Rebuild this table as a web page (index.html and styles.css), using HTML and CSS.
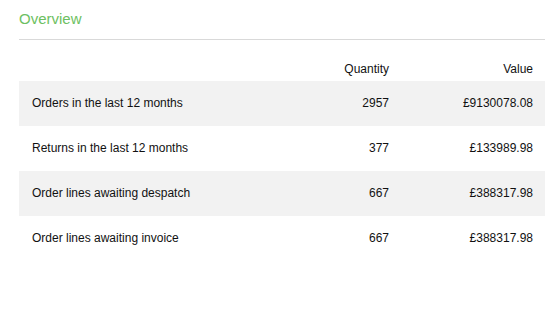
FILE: index.html
```html
<!DOCTYPE html>
<html>
<head>
<meta charset="utf-8">
<link rel="stylesheet" href="styles.css">
</head>
<body>
<div class="panel">
  <h2 class="title">Overview</h2>
  <table class="overview">
    <colgroup>
      <col>
      <col class="num-col">
      <col class="num-col">
    </colgroup>
    <thead>
      <tr><th class="label"></th><th>Quantity</th><th>Value</th></tr>
    </thead>
    <tbody>
      <tr class="alt"><td class="label">Orders in the last 12 months</td><td>2957</td><td>£9130078.08</td></tr>
      <tr><td class="label">Returns in the last 12 months</td><td>377</td><td>£133989.98</td></tr>
      <tr class="alt"><td class="label">Order lines awaiting despatch</td><td>667</td><td>£388317.98</td></tr>
      <tr><td class="label">Order lines awaiting invoice</td><td>667</td><td>£388317.98</td></tr>
    </tbody>
  </table>
</div>
</body>
</html>
```
FILE: styles.css
```css
html, body {
  margin: 0;
  padding: 0;
  background: #ffffff;
}
body {
  font-family: "Liberation Sans", Arial, sans-serif;
  color: #111111;
}
.panel {
  width: 526px;
  margin-left: 19px;
}
.title {
  margin: 0;
  padding: 10px 0 12px;
  font-size: 15px;
  line-height: 17px;
  font-weight: normal;
  color: #6dbf62;
  border-bottom: 1px solid #d9d9d9;
}
.overview {
  width: 100%;
  border-collapse: collapse;
  margin-top: 14px;
  font-size: 12px;
  line-height: 14px;
}
.num-col {
  width: 144px;
}
.overview th {
  font-weight: normal;
  text-align: right;
  padding: 8px 12px 5px 12px;
}
.overview td {
  text-align: right;
  padding: 15px 12px 16px 12px;
}
.overview .label {
  text-align: left;
  padding-left: 13px;
}
.overview tr.alt td {
  background: #f2f2f2;
}
```
